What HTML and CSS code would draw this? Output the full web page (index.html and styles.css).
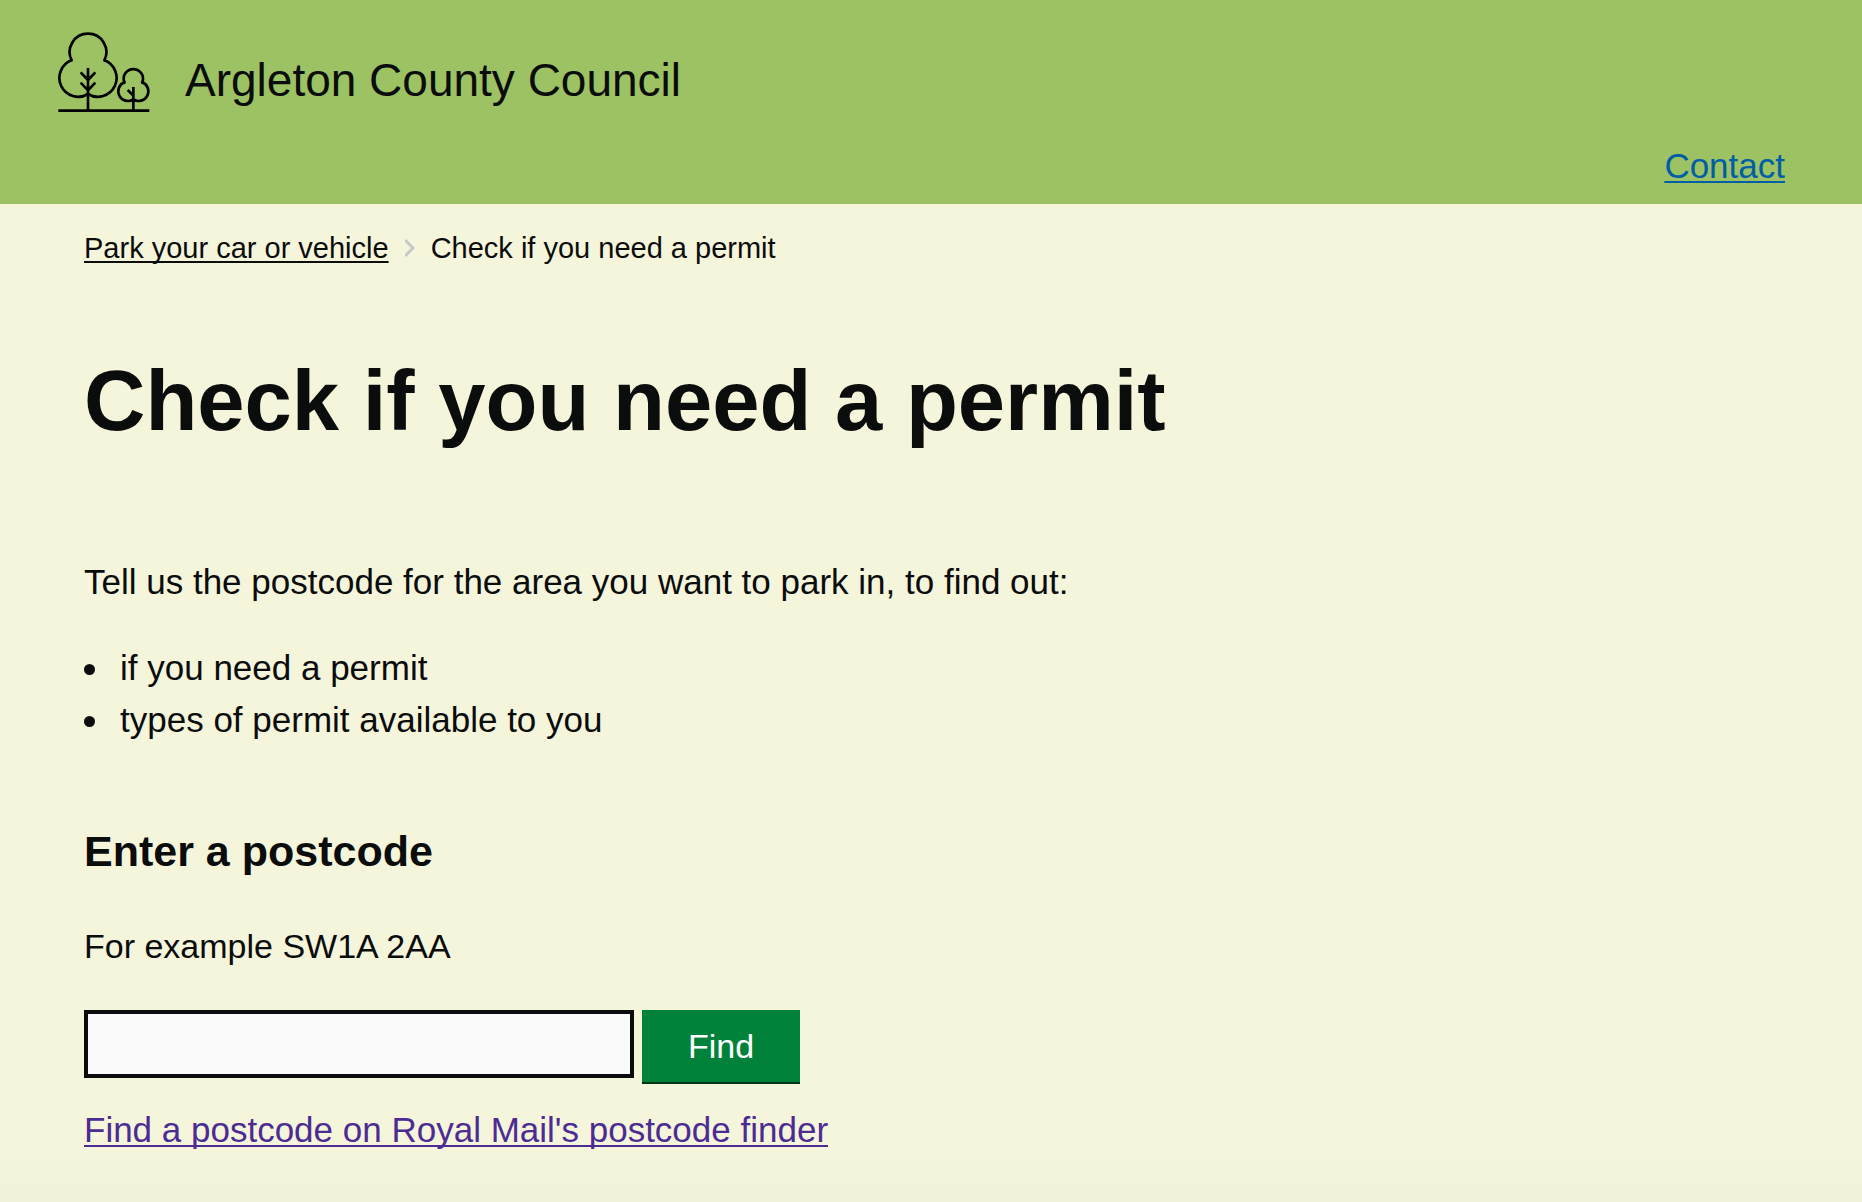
FILE: index.html
```
<!DOCTYPE html>
<html lang="en">
<head>
<meta charset="utf-8">
<meta name="viewport" content="width=device-width, initial-scale=1">
<title>Check if you need a permit - Argleton County Council</title>
<link rel="stylesheet" href="styles.css">
</head>
<body>
<header class="header">
  <div class="brand">
    <svg class="brand-logo" viewBox="51 33 282 246" aria-hidden="true">
      <path d="M144 222A56.4 56.4 0 1 1 95 121L98 122M95 121A55 55 0 1 1 193 121L190 122M193 121A56.4 56.4 0 1 1 144 222"/>
      <path d="M144 144V272M122 157L144 180L166 157M122 188L144 211L166 188"/>
      <path d="M280 238A29 29 0 1 1 253 187L257 188M253 187A29 29 0 1 1 307 187L303 188M307 187A29 29 0 1 1 280 238"/>
      <path d="M280 201V272M263 210L280 227M55 272H328"/>
    </svg>
    <span class="brand-name">Argleton County Council</span>
  </div>
  <nav class="header-nav" aria-label="Main">
    <a class="header-link" href="#contact">Contact</a>
  </nav>
</header>
<div class="page">
  <nav aria-label="Breadcrumb">
    <ol class="breadcrumbs">
      <li><a class="breadcrumb-link" href="#parking">Park your car or vehicle</a></li>
      <li class="breadcrumb-current">
        <svg class="chevron" viewBox="0 0 10 20" aria-hidden="true"><path d="M0 2L8 10L0 18"/></svg>
        <span aria-current="page">Check if you need a permit</span>
      </li>
    </ol>
  </nav>
  <main>
    <h1 class="title">Check if you need a permit</h1>
    <p class="intro">Tell us the postcode for the area you want to park in, to find out:</p>
    <ul class="bullets">
      <li>if you need a permit</li>
      <li>types of permit available to you</li>
    </ul>
    <form class="lookup">
      <h2 class="lookup-title"><label for="postcode">Enter a postcode</label></h2>
      <p class="hint" id="postcode-hint">For example SW1A 2AA</p>
      <div class="lookup-row">
        <input class="postcode" id="postcode" name="postcode" type="text" aria-describedby="postcode-hint">
        <button class="button" type="submit">Find</button>
      </div>
    </form>
    <a class="finder-link" href="#finder">Find a postcode on Royal Mail's postcode finder</a>
  </main>
</div>
</body>
</html>
```

FILE: styles.css
```
* { box-sizing: border-box; }

body {
  margin: 0;
  min-height: 100vh;
  background: linear-gradient(to top, #f2f2d9, #f5f5dc 48px);
  color: #0b0c0c;
  font: 35px/52px "Liberation Sans", Arial, sans-serif;
}

h1, h2, p, ol, ul { margin: 0; padding: 0; }

a {
  text-decoration-thickness: 2px;
  text-underline-offset: 3px;
  text-decoration-skip-ink: none;
}

.header {
  padding: 31px 77px 12px 57px;
  background: #9dc264;
}

.brand {
  display: flex;
  align-items: center;
  gap: 34px;
}

.brand-logo {
  width: 94px;
  height: 82px;
  fill: none;
  stroke: #000;
  stroke-width: 8;
}

.brand-name {
  padding-top: 16px;
  font-size: 46px;
}

.header-nav {
  display: flex;
  justify-content: flex-end;
  margin-top: 27px;
}

.header-link { color: #005ea5; }

.page { padding: 24px 84px 46px; }

.breadcrumbs {
  display: flex;
  flex-wrap: wrap;
  gap: 16px;
  list-style: none;
  font-size: 29px;
  line-height: 40px;
}

.breadcrumb-link { color: #0b0c0c; }

.breadcrumb-current {
  display: flex;
  align-items: center;
  gap: 16px;
}

.chevron {
  width: 10px;
  height: 20px;
  fill: none;
  stroke: #c4c7c6;
  stroke-width: 3;
}

.title {
  margin: 85px 0 107px;
  font-size: 85px;
  line-height: 96px;
}

.bullets {
  margin: 34px 0 79px;
  padding-left: 28px;
}

.bullets li { padding-left: 8px; }

.lookup-title { font-size: 43px; line-height: 52px; }

.hint {
  margin: 43px 0 38px;
  font-size: 34px;
}

.lookup-row {
  display: flex;
  align-items: flex-start;
  gap: 8px;
}

.postcode {
  flex: 0 1 550px;
  min-width: 0;
  height: 68px;
  padding: 8px;
  border: 4px solid #0b0c0c;
  border-radius: 0;
  background: #fafafa;
  color: inherit;
  font: inherit;
}

.button {
  padding: 10px 46px;
  border: 0;
  border-bottom: 2px solid #003618;
  background: #00823b;
  color: #fff;
  font: inherit;
  font-size: 34px;
}

.finder-link {
  display: inline-block;
  margin-top: 20px;
  color: #4c2c92;
}
```
